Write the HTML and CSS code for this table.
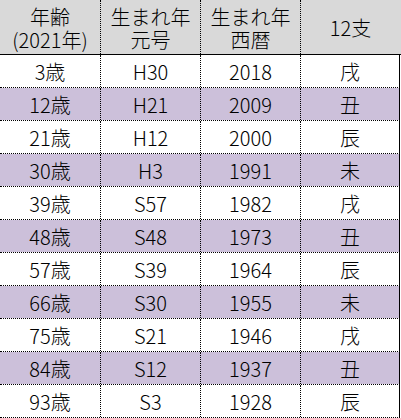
FILE: index.html
```html
<!DOCTYPE html>
<html lang="ja">
<head>
<meta charset="utf-8">
<link rel="stylesheet" href="styles.css">
</head>
<body>
<div class="sheet">
  <div class="row head">
    <div class="cell"><span>年齢</span><span>(2021年)</span></div>
    <div class="cell"><span>生まれ年</span><span>元号</span></div>
    <div class="cell"><span>生まれ年</span><span>西暦</span></div>
    <div class="cell last"><span>12支</span></div>
  </div>
  <div class="row"><div class="cell">3歳</div><div class="cell">H30</div><div class="cell">2018</div><div class="cell last">戌</div></div>
  <div class="row alt"><div class="cell">12歳</div><div class="cell">H21</div><div class="cell">2009</div><div class="cell last">丑</div></div>
  <div class="row"><div class="cell">21歳</div><div class="cell">H12</div><div class="cell">2000</div><div class="cell last">辰</div></div>
  <div class="row alt"><div class="cell">30歳</div><div class="cell">H3</div><div class="cell">1991</div><div class="cell last">未</div></div>
  <div class="row"><div class="cell">39歳</div><div class="cell">S57</div><div class="cell">1982</div><div class="cell last">戌</div></div>
  <div class="row alt"><div class="cell">48歳</div><div class="cell">S48</div><div class="cell">1973</div><div class="cell last">丑</div></div>
  <div class="row"><div class="cell">57歳</div><div class="cell">S39</div><div class="cell">1964</div><div class="cell last">辰</div></div>
  <div class="row alt"><div class="cell">66歳</div><div class="cell">S30</div><div class="cell">1955</div><div class="cell last">未</div></div>
  <div class="row"><div class="cell">75歳</div><div class="cell">S21</div><div class="cell">1946</div><div class="cell last">戌</div></div>
  <div class="row alt"><div class="cell">84歳</div><div class="cell">S12</div><div class="cell">1937</div><div class="cell last">丑</div></div>
  <div class="row"><div class="cell">93歳</div><div class="cell">S3</div><div class="cell">1928</div><div class="cell last">辰</div></div>
</div>
</body>
</html>
```
FILE: styles.css
```css
html, body {
  margin: 0;
  padding: 0;
  background: #ffffff;
}
.sheet {
  width: 401px;
  font-family: "Noto Sans CJK JP", "Liberation Sans", sans-serif;
  font-weight: 300;
  font-size: 20px;
  color: #000;
}
.row {
  display: grid;
  grid-template-columns: 101px 100px 100px 99px;
  height: 33px;
  box-sizing: border-box;
  border-bottom: 1px dotted #000;
  width: 400px;
}
.row.alt .cell {
  background: #ccc0da;
}
.cell {
  box-sizing: border-box;
  border-right: 1px dotted #000;
  display: flex;
  flex-direction: column;
  align-items: center;
  justify-content: center;
  line-height: 23px;
  white-space: nowrap;
}
.cell.last {
  border-right: 1px solid #000;
}
.row.head {
  width: 401px;
  height: 55px;
  background: #d9d9d9;
  border-bottom: 1px solid #000;
}
.row.head .cell {
  justify-content: flex-start;
  padding-top: 5px;
}
.row.head .cell.last {
  border-right: none;
  justify-content: center;
  padding-top: 0;
}
```
